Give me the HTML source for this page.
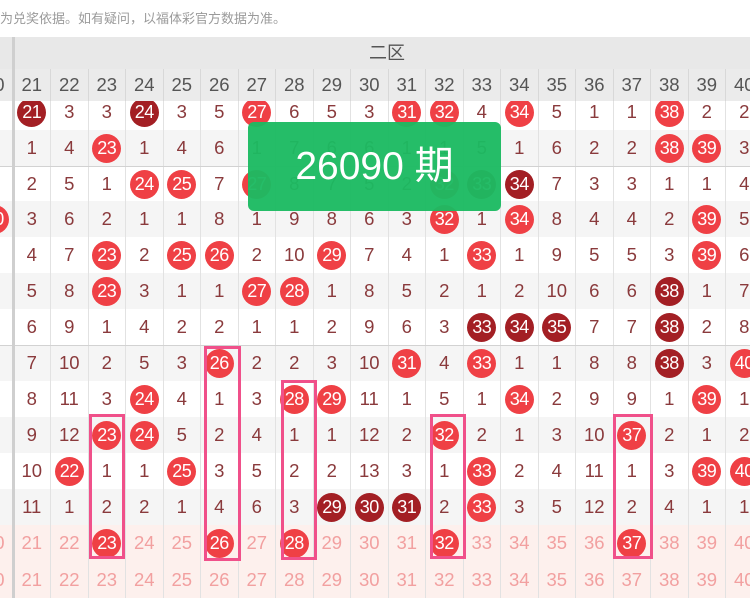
<!DOCTYPE html>
<html><head><meta charset="utf-8"><style>
*{margin:0;padding:0;box-sizing:border-box}
body{width:750px;height:598px;overflow:hidden;background:#fff;position:relative;font-family:"Liberation Sans","Noto Sans CJK SC",sans-serif}
.top{position:absolute;left:0;top:8px;font-size:13px;color:#9a9a9a;white-space:nowrap}
.h1{position:absolute;left:0;top:37px;width:750px;height:32px;background:#e8e8e8;text-align:center;font-size:18px;color:#555;line-height:32px;padding-left:24px}
.row{position:absolute;left:-24px;height:36px;display:flex;width:800px}
.row>*{width:37.5px;flex:none;height:100%;border-right:1px solid #e2e2e2;display:flex;align-items:center;justify-content:center;font-size:18.5px;color:#8a3a3c;font-style:normal;font-weight:normal}
.row b span{width:29px;height:29px;border-radius:50%;background:#ef4045;color:#fff;display:flex;align-items:center;justify-content:center;font-size:18px;letter-spacing:-0.5px}
.row b.d span{background:#a31f24}
.hd{background:#ebebeb;top:69px;height:32px}
.hd>*{color:#555;border-right:1px solid #d8d8d8}
.s{background:#f5f5f5}
.p{background:#fdf0ed}
.p>*{color:#f2a0a0}
.vl{position:absolute;left:12px;top:37px;width:3px;height:561px;background:#cfcfcf}
.hl{position:absolute;left:0;width:750px;height:1px;background:#d2d2d2}
.bx{position:absolute;border:3px solid #f0508a}
.g{position:absolute;left:248px;top:122px;width:253px;height:89px;background:rgba(28,186,98,.96);border-radius:6px;color:#fff;font-size:39px;text-align:center;line-height:89px}
</style></head><body>
<div class="top">为兑奖依据。如有疑问，以福体彩官方数据为准。</div>

<div class="row" style="top:94px"><i>1</i><b class="d"><span>21</span></b><i>3</i><i>3</i><b class="d"><span>24</span></b><i>3</i><i>5</i><b><span>27</span></b><i>6</i><i>5</i><i>3</i><b><span>31</span></b><b><span>32</span></b><i>4</i><b><span>34</span></b><i>5</i><i>1</i><i>1</i><b><span>38</span></b><i>2</i><i>2</i></div>
<div class="row s" style="top:130px"><i>1</i><i>1</i><i>4</i><b><span>23</span></b><i>1</i><i>4</i><i>6</i><i>1</i><i>7</i><i>6</i><i>6</i><i>1</i><i>1</i><i>5</i><i>1</i><i>6</i><i>2</i><i>2</i><b><span>38</span></b><b><span>39</span></b><i>3</i></div>
<div class="row" style="top:166px"><i>1</i><i>2</i><i>5</i><i>1</i><b><span>24</span></b><b><span>25</span></b><i>7</i><b><span>27</span></b><i>8</i><i>7</i><i>5</i><i>2</i><b><span>32</span></b><b class="d"><span>33</span></b><b class="d"><span>34</span></b><i>7</i><i>3</i><i>3</i><i>1</i><i>1</i><i>4</i></div>
<div class="row s" style="top:201px"><b><span>20</span></b><i>3</i><i>6</i><i>2</i><i>1</i><i>1</i><i>8</i><i>1</i><i>9</i><i>8</i><i>6</i><i>3</i><b><span>32</span></b><i>1</i><b><span>34</span></b><i>8</i><i>4</i><i>4</i><i>2</i><b><span>39</span></b><i>5</i></div>
<div class="row" style="top:237px"><i>1</i><i>4</i><i>7</i><b><span>23</span></b><i>2</i><b><span>25</span></b><b><span>26</span></b><i>2</i><i>10</i><b><span>29</span></b><i>7</i><i>4</i><i>1</i><b><span>33</span></b><i>1</i><i>9</i><i>5</i><i>5</i><i>3</i><b><span>39</span></b><i>6</i></div>
<div class="row s" style="top:273px"><i>1</i><i>5</i><i>8</i><b><span>23</span></b><i>3</i><i>1</i><i>1</i><b><span>27</span></b><b><span>28</span></b><i>1</i><i>8</i><i>5</i><i>2</i><i>1</i><i>2</i><i>10</i><i>6</i><i>6</i><b class="d"><span>38</span></b><i>1</i><i>7</i></div>
<div class="row" style="top:309px"><i>1</i><i>6</i><i>9</i><i>1</i><i>4</i><i>2</i><i>2</i><i>1</i><i>1</i><i>2</i><i>9</i><i>6</i><i>3</i><b class="d"><span>33</span></b><b class="d"><span>34</span></b><b class="d"><span>35</span></b><i>7</i><i>7</i><b class="d"><span>38</span></b><i>2</i><i>8</i></div>
<div class="row s" style="top:345px"><i>1</i><i>7</i><i>10</i><i>2</i><i>5</i><i>3</i><b><span>26</span></b><i>2</i><i>2</i><i>3</i><i>10</i><b><span>31</span></b><i>4</i><b><span>33</span></b><i>1</i><i>1</i><i>8</i><i>8</i><b class="d"><span>38</span></b><i>3</i><b><span>40</span></b></div>
<div class="row" style="top:381px"><i>1</i><i>8</i><i>11</i><i>3</i><b><span>24</span></b><i>4</i><i>1</i><i>3</i><b><span>28</span></b><b><span>29</span></b><i>11</i><i>1</i><i>5</i><i>1</i><b><span>34</span></b><i>2</i><i>9</i><i>9</i><i>1</i><b><span>39</span></b><i>1</i></div>
<div class="row s" style="top:417px"><i>1</i><i>9</i><i>12</i><b><span>23</span></b><b><span>24</span></b><i>5</i><i>2</i><i>4</i><i>1</i><i>1</i><i>12</i><i>2</i><b><span>32</span></b><i>2</i><i>1</i><i>3</i><i>10</i><b><span>37</span></b><i>2</i><i>1</i><i>2</i></div>
<div class="row" style="top:453px"><i>1</i><i>10</i><b><span>22</span></b><i>1</i><i>1</i><b><span>25</span></b><i>3</i><i>5</i><i>2</i><i>2</i><i>13</i><i>3</i><i>1</i><b><span>33</span></b><i>2</i><i>4</i><i>11</i><i>1</i><i>3</i><b><span>39</span></b><b><span>40</span></b></div>
<div class="row s" style="top:489px"><i>1</i><i>11</i><i>1</i><i>2</i><i>2</i><i>1</i><i>4</i><i>6</i><i>3</i><b class="d"><span>29</span></b><b class="d"><span>30</span></b><b class="d"><span>31</span></b><i>2</i><b><span>33</span></b><i>3</i><i>5</i><i>12</i><i>2</i><i>4</i><i>1</i><i>1</i></div>
<div class="row p" style="top:525px"><i>20</i><i>21</i><i>22</i><b><span>23</span></b><i>24</i><i>25</i><b><span>26</span></b><i>27</i><b><span>28</span></b><i>29</i><i>30</i><i>31</i><b><span>32</span></b><i>33</i><i>34</i><i>35</i><i>36</i><b><span>37</span></b><i>38</i><i>39</i><i>40</i></div>
<div class="row p" style="top:561px;height:37px"><i>20</i><i>21</i><i>22</i><i>23</i><i>24</i><i>25</i><i>26</i><i>27</i><i>28</i><i>29</i><i>30</i><i>31</i><i>32</i><i>33</i><i>34</i><i>35</i><i>36</i><i>37</i><i>38</i><i>39</i><i>40</i></div>

<div class="h1">二区</div>
<div class="row hd"><i>20</i><i>21</i><i>22</i><i>23</i><i>24</i><i>25</i><i>26</i><i>27</i><i>28</i><i>29</i><i>30</i><i>31</i><i>32</i><i>33</i><i>34</i><i>35</i><i>36</i><i>37</i><i>38</i><i>39</i><i>40</i></div>

<div class="hl" style="top:166px"></div>
<div class="hl" style="top:345px"></div>
<div class="vl"></div>

<div class="bx" style="left:89px;top:414px;width:36px;height:145px"></div>
<div class="bx" style="left:204px;top:346px;width:37px;height:215px"></div>
<div class="bx" style="left:281px;top:380px;width:36px;height:180px"></div>
<div class="bx" style="left:430px;top:414px;width:36px;height:145px"></div>
<div class="bx" style="left:613px;top:414px;width:40px;height:145px"></div>

<div class="g">26090 期</div>
</body></html>
